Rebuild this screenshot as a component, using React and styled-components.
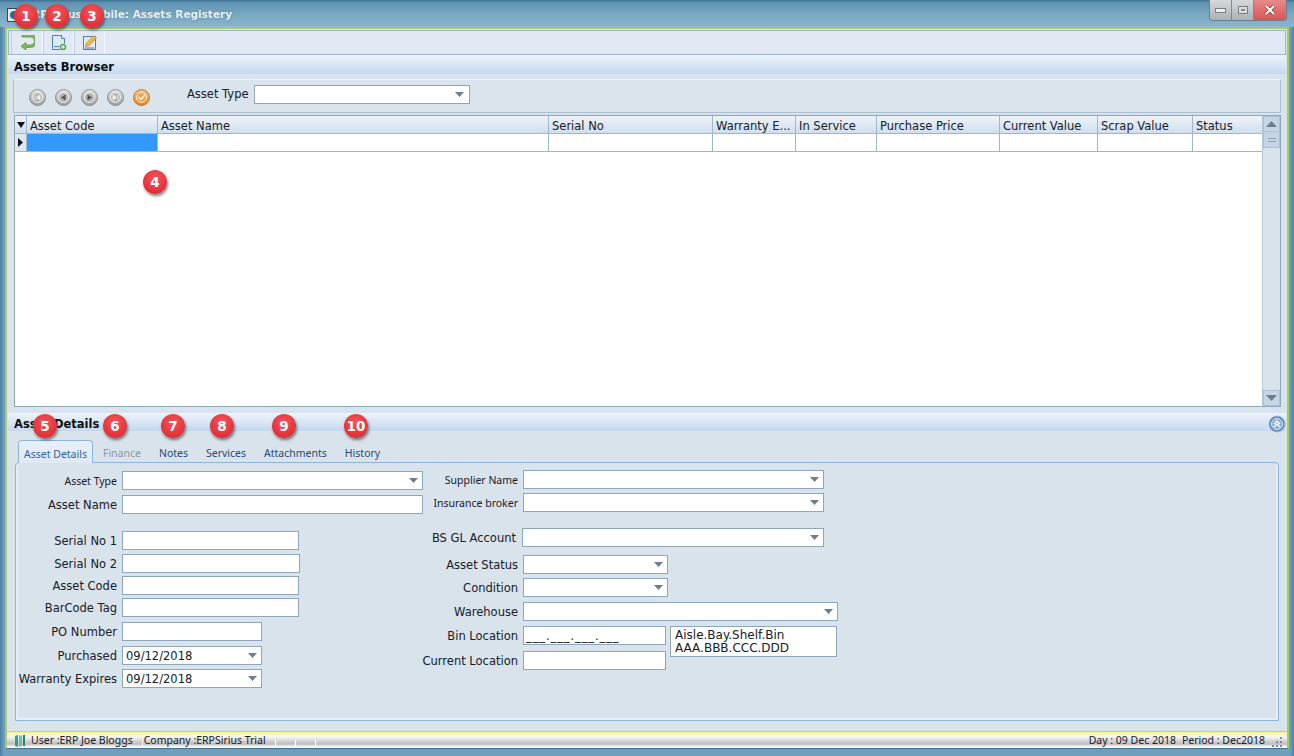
import styled, { createGlobalStyle } from "styled-components";

const GRID_COLUMNS = [
  { label: "Asset Code", width: 131 },
  { label: "Asset Name", width: 391 },
  { label: "Serial No", width: 164 },
  { label: "Warranty E...", width: 83 },
  { label: "In Service", width: 81 },
  { label: "Purchase Price", width: 123 },
  { label: "Current Value", width: 98 },
  { label: "Scrap Value", width: 95 },
  { label: "Status", width: 69 },
];

const TABS = ["Asset Details", "Finance", "Notes", "Services", "Attachments", "History"];

const BADGES = [
  { n: 1, x: 26, y: 16 }, { n: 2, x: 57, y: 16 }, { n: 3, x: 92, y: 16 },
  { n: 4, x: 155, y: 182 }, { n: 5, x: 45, y: 426 }, { n: 6, x: 115, y: 426 },
  { n: 7, x: 173, y: 426 }, { n: 8, x: 222, y: 426 }, { n: 9, x: 284, y: 426 },
  { n: 10, x: 356, y: 426 },
];

const LEFT_FIELDS = [
  { label: "Asset Type", w: 301, top: 0, combo: true, narrow: true },
  { label: "Asset Name", w: 301, top: 5 },
  { label: "Serial No 1", w: 177, top: 17 },
  { label: "Serial No 2", w: 178, top: 4 },
  { label: "Asset Code", w: 177, top: 3 },
  { label: "BarCode Tag", w: 177, top: 3 },
  { label: "PO Number", w: 140, top: 5 },
  { label: "Purchased", w: 140, top: 5, combo: true, value: "09/12/2018" },
  { label: "Warranty Expires", w: 140, top: 4, combo: true, value: "09/12/2018" },
];

const RIGHT_FIELDS = [
  { label: "Supplier Name", w: 301, top: -1, combo: true, narrow: true },
  { label: "Insurance broker", w: 301, top: 4, combo: true, narrow: true },
  { label: "BS GL Account", w: 302, top: 16, combo: true, shift: -1, pad: 2 },
  { label: "Asset Status", w: 145, top: 8, combo: true },
  { label: "Condition", w: 145, top: 4, combo: true },
  { label: "Warehouse", w: 315, top: 5, combo: true },
];

function Arrow() {
  return <svg width="9" height="5" viewBox="0 0 9 5"><path d="M0 0h9L4.5 5z" fill="#6d7f8f" /></svg>;
}

function ComboBox({ w, value, shift }) {
  return (
    <Input $w={w} $shift={shift}>
      <span>{value}</span>
      <ArrowSlot><Arrow /></ArrowSlot>
    </Input>
  );
}

function Field({ label, w, top, combo, value, narrow, shift, pad, labelWidth }) {
  return (
    <Row $top={top}>
      <Label $w={labelWidth} $narrow={narrow} $pad={pad}>{label}</Label>
      {combo ? <ComboBox w={w} value={value} shift={shift} /> : <Input $w={w} />}
    </Row>
  );
}

function NavButton({ orange, glyph }) {
  return (
    <svg width="17" height="17" viewBox="0 0 17 17">
      <defs>
        <linearGradient id={orange ? "navO" : "navG"} x1="0" y1="0" x2="0" y2="1">
          <stop offset="0" stopColor={orange ? "#fbc27a" : "#e4e4e4"} />
          <stop offset="1" stopColor={orange ? "#e8801e" : "#9c9c9c"} />
        </linearGradient>
      </defs>
      <circle cx="8.5" cy="8.5" r="8" fill={`url(#${orange ? "navO" : "navG"})`} stroke={orange ? "#d8761a" : "#8f8f8f"} />
      <circle cx="8.5" cy="8.5" r="5" fill={orange ? "#f9a24a" : "#b5b5b5"} stroke="#f4f4f4" strokeWidth="1" />
      {glyph === "first" && <path d="M6 6v5M11 6v5L7.5 8.5z" stroke="#eee" fill="#eee" strokeWidth=".8" />}
      {glyph === "prev" && <path d="M10.5 5.5v6L6 8.5z" fill="#555" />}
      {glyph === "next" && <path d="M6.5 5.5v6L11 8.5z" fill="#555" />}
      {glyph === "last" && <path d="M11 6v5M6 6v5L9.5 8.5z" stroke="#eee" fill="#eee" strokeWidth=".8" />}
      {orange && <path d="M5.5 8l2.5 2.5 4-5" stroke="#fff" strokeWidth="1.5" fill="none" />}
    </svg>
  );
}

export default function App() {
  return (
    <Win>
      <GlobalStyle />
      <TitleBar>
        <AppIcon viewBox="0 0 14 14">
          <rect x=".5" y=".5" width="13" height="13" fill="#dfe9ef" stroke="#31495c" />
          <circle cx="7" cy="7" r="4" fill="#2e6f8e" />
        </AppIcon>
        <TitleText>ERPSirius Mobile: Assets Registery</TitleText>
        <WinButtons>
          <WinBtn>
            <svg width="11" height="5" viewBox="0 0 11 5"><rect x=".5" y=".5" width="10" height="4" fill="#eee" stroke="#7d7d7d" /></svg>
          </WinBtn>
          <WinBtn>
            <svg width="10" height="8" viewBox="0 0 10 8"><rect x=".5" y=".5" width="9" height="7" fill="#ddd" stroke="#7d7d7d" /><rect x="3" y="3" width="4" height="2" fill="#8a8a8a" /></svg>
          </WinBtn>
          <CloseBtn>
            <svg width="12" height="10" viewBox="0 0 12 10"><path d="M2 1l8 8M10 1l-8 8" stroke="#7a3030" strokeWidth="3.4" /><path d="M2 1l8 8M10 1l-8 8" stroke="#fff" strokeWidth="2.2" /></svg>
          </CloseBtn>
        </WinButtons>
      </TitleBar>

      <Frame>
        <Toolbar>
          <ToolCell $w={32}>
            <svg width="15" height="15" viewBox="0 0 15 15">
              <path d="M2 1.5h8.5a4 4 0 0 1 0 8H6V7L1 10.8 6 14.5V12h4.5a6.5 6.5 0 0 0 0-13H2z" fill="#7dbb5a" stroke="#4f8f3a" strokeWidth=".7" transform="translate(0 .5)" />
            </svg>
          </ToolCell>
          <ToolCell $w={31}>
            <svg width="16" height="16" viewBox="0 0 16 16">
              <path d="M1.5.5h9l3 3v11h-12z" fill="#dbe9f9" stroke="#4d7fb8" />
              <path d="M10.5.5v3h3" fill="#fff" stroke="#4d7fb8" />
              <path d="M3 11.5h6" stroke="#4d7fb8" />
              <circle cx="12" cy="12" r="3.5" fill="#4fa14a" stroke="#e9f3e6" strokeWidth=".6" />
              <path d="M10 12h4M12 10v4" stroke="#fff" />
            </svg>
          </ToolCell>
          <ToolCell $w={31}>
            <svg width="16" height="16" viewBox="0 0 16 16">
              <rect x="1.5" y="1.5" width="12" height="13" fill="#dbe9f9" stroke="#4d7fb8" />
              <path d="M3.5 11.5l1-3.5 7.5-7.5 2.5 2.5-7.5 7.5z" fill="#f2b63d" stroke="#c98a1d" strokeWidth=".7" />
              <path d="M3 13h9" stroke="#4d7fb8" />
            </svg>
          </ToolCell>
        </Toolbar>

        <SectionHeader $h={19} $pt={5}>Assets Browser</SectionHeader>

        <NavPanel>
          <NavGroup>
            <NavButton glyph="first" />
            <NavButton glyph="prev" />
            <NavButton glyph="next" />
            <NavButton glyph="last" />
            <NavButton orange />
          </NavGroup>
          <NavLabel>Asset Type</NavLabel>
          <NavCombo><ComboBox w={216} /></NavCombo>
        </NavPanel>

        <Grid>
          <GridMain>
            <HeadRow>
              <Corner><svg width="8" height="6" viewBox="0 0 8 6"><path d="M0 0h8L4 6z" fill="#111" /></svg></Corner>
              {GRID_COLUMNS.map((c) => <HeadCell key={c.label} $w={c.width}>{c.label}</HeadCell>)}
            </HeadRow>
            <DataRow>
              <RowMark><svg width="5" height="9" viewBox="0 0 5 9"><path d="M0 0l5 4.5L0 9z" fill="#111" /></svg></RowMark>
              {GRID_COLUMNS.map((c, i) => <DataCell key={c.label} $w={c.width} $selected={i === 0} />)}
            </DataRow>
          </GridMain>
          <ScrollBar>
            <ScrollBtn><svg width="11" height="6" viewBox="0 0 11 6"><path d="M5.5 0L11 6H0z" fill="#6d7f8f" /></svg></ScrollBtn>
            <ScrollThumb><svg width="8" height="4" viewBox="0 0 8 4"><path d="M0 .5h8M0 3.5h8" stroke="#8fa6bb" /></svg></ScrollThumb>
            <ScrollTrack />
            <ScrollBtn><svg width="11" height="6" viewBox="0 0 11 6"><path d="M0 0h11L5.5 6z" fill="#6d7f8f" /></svg></ScrollBtn>
          </ScrollBar>
        </Grid>

        <SectionHeader $mt={6} $h={18} $pt={4}>
          Asset Details
          <Collapse viewBox="0 0 18 18">
            <circle cx="9" cy="9" r="8" fill="#5d88bd" stroke="#9cb8d8" />
            <circle cx="9" cy="9" r="5.5" fill="#87a9d2" stroke="#e4edf7" />
            <path d="M6 9l3-3 3 3M6 12l3-3 3 3" fill="none" stroke="#fff" strokeWidth="1.4" />
          </Collapse>
        </SectionHeader>

        <TabStrip>
          {TABS.map((t, i) => <Tab key={t} $active={i === 0} $disabled={t === "Finance"}>{t}</Tab>)}
        </TabStrip>

        <TabPanel>
          <LeftCol>
            {LEFT_FIELDS.map((f) => <Field key={f.label} {...f} labelWidth={101} />)}
          </LeftCol>
          <RightCol>
            {RIGHT_FIELDS.map((f) => <Field key={f.label} {...f} labelWidth={97} />)}
            <BinArea>
              <BinFields>
                <Row $top={0}>
                  <Label $w={97}>Bin Location</Label>
                  <Input $w={143}><Mask>___.___.___.___</Mask></Input>
                </Row>
                <Row $top={6}>
                  <Label $w={97}>Current Location</Label>
                  <Input $w={143} />
                </Row>
              </BinFields>
              <BinHint>Aisle.Bay.Shelf.Bin<br />AAA.BBB.CCC.DDD</BinHint>
            </BinArea>
          </RightCol>
        </TabPanel>

        <StatusBar>
          <StatusIcon viewBox="0 0 12 14">
            <path d="M1 2l3-1v12l-3-1z" fill="#3f9c8d" />
            <path d="M5 1l3 1v10l-3 1z" fill="#66c0ae" />
            <path d="M9 1h2v11H9z" fill="#2f7f73" />
          </StatusIcon>
          <StatusText>User :ERP Joe Bloggs</StatusText>
          <StatusDivider $ml={9} />
          <StatusText $ml={1}>Company :ERPSirius Trial</StatusText>
          <StatusDivider $ml={9} />
          <StatusDivider $ml={19} />
          <StatusDivider $ml={19} />
          <StatusRight>
            <StatusText>Day : 09 Dec 2018</StatusText>
            <StatusText $ml={6}>Period : Dec2018</StatusText>
            <Grip width="11" height="11" viewBox="0 0 11 11">
              <path d="M9 1h2v2H9zM5 5h2v2H5zM9 5h2v2H9zM1 9h2v2H1zM5 9h2v2H5zM9 9h2v2H9z" fill="#7b8ea0" />
            </Grip>
          </StatusRight>
        </StatusBar>
      </Frame>

      {BADGES.map((b) => (
        <Badge key={b.n} style={{ left: b.x - 12, top: b.y - 12 }}>{b.n}</Badge>
      ))}
    </Win>
  );
}

const GlobalStyle = createGlobalStyle`
  html, body { margin: 0; padding: 0; background: #3f6f92; }
  * { box-sizing: border-box; }
`;

const Win = styled.div`
  position: relative;
  width: 1294px;
  height: 756px;
  overflow: hidden;
  display: flex;
  flex-direction: column;
  font-family: "DejaVu Sans", sans-serif;
  font-size: 11.5px;
  color: #16202a;
  background: linear-gradient(to right, #4a7fa2 0, #6f9fbc 4px, #6f9fbc 1290px, #4a7fa2 100%);
  padding: 0 5px 7px 5px;
`;

const TitleBar = styled.div`
  height: 27px;
  flex: none;
  display: flex;
  align-items: flex-start;
  margin: 0 -5px;
  padding: 0 7px;
  background: linear-gradient(to bottom, #3f7394 0, #5f94b2 3px, #79a8c2 14px, #8bb4cb 100%);
`;

const AppIcon = styled.svg`
  width: 14px;
  height: 14px;
  margin-top: 8px;
  flex: none;
`;

const TitleText = styled.div`
  margin: 8px 0 0 4px;
  font-size: 10.5px;
  font-weight: 700;
  color: #e6eff5;
  text-shadow: 0 0 3px #5a8199;
`;

const WinButtons = styled.div`
  margin-left: auto;
  display: flex;
  height: 21px;
  border: 1px solid #6f7f8a;
  border-top: 0;
  border-radius: 0 0 4px 4px;
  overflow: hidden;
`;

const WinBtn = styled.div`
  width: 22px;
  display: flex;
  align-items: center;
  justify-content: center;
  background: linear-gradient(to bottom, #d6d9db, #a9b2b8);
  border-right: 1px solid #7c8a94;
`;

const CloseBtn = styled.div`
  width: 32px;
  display: flex;
  align-items: center;
  justify-content: center;
  background: linear-gradient(to bottom, #e88a8a, #d85656);
`;

const Frame = styled.div`
  flex: 1;
  min-height: 0;
  display: flex;
  flex-direction: column;
  background: #d9e3ec;
  border: 2px solid #a9c96a;
  border-bottom: 1px solid #3f6f92;
  padding: 1px 1px 0;
`;

const Toolbar = styled.div`
  height: 25px;
  flex: none;
  display: flex;
  padding-left: 2px;
  background: #e2e9f4;
  border: 1px solid #9ab7cf;
`;

const ToolCell = styled.div`
  width: ${(p) => p.$w}px;
  display: flex;
  align-items: center;
  justify-content: center;
  border-left: 1px solid #c3cfdd;
  border-right: 1px solid #f4f7fb;
`;

const SectionHeader = styled.div`
  position: relative;
  height: ${(p) => p.$h}px;
  flex: none;
  margin-top: ${(p) => p.$mt || 0}px;
  padding: ${(p) => p.$pt}px 0 0 6px;
  font-size: 11.5px;
  line-height: 14px;
  font-weight: 700;
  color: #0a0f14;
  background: linear-gradient(to bottom, #edf4fc, #c5d8ef);
`;

const Collapse = styled.svg`
  position: absolute;
  right: 0;
  top: 2px;
  width: 18px;
  height: 18px;
`;

const NavPanel = styled.div`
  height: 34px;
  flex: none;
  margin: 5px 5px 0 5px;
  padding-left: 15px;
  display: flex;
  align-items: center;
  background: #dbe4ec;
  border: 1px solid #a9bfd2;
  border-top-color: #eef3f7;
`;

const NavGroup = styled.div`
  display: flex;
  gap: 9px;
  margin-right: 37px;
  margin-top: 2px;
`;

const NavLabel = styled.span`
  margin: 0 5px 4px 0;
`;

const NavCombo = styled.div`
  margin-bottom: 4px;
`;

const Grid = styled.div`
  height: 292px;
  flex: none;
  display: flex;
  margin: 2px 5px 0 6px;
  background: #fff;
  border: 1px solid #8ea6bb;
`;

const GridMain = styled.div`
  flex: 1;
  min-width: 0;
`;

const HeadRow = styled.div`
  display: flex;
  height: 18px;
  background: linear-gradient(to bottom, #eef3f9, #d0dfee);
  border-bottom: 1px solid #9fb7cc;
`;

const Corner = styled.div`
  width: 12px;
  flex: none;
  display: flex;
  align-items: center;
  justify-content: center;
  border-right: 1px solid #9fb7cc;
`;

const HeadCell = styled.div`
  width: ${(p) => p.$w}px;
  flex: none;
  padding: 3px 0 0 3px;
  white-space: nowrap;
  overflow: hidden;
  border-right: 1px solid #9fb7cc;
  &:last-child { border-right: 0; flex: 1; }
`;

const DataRow = styled.div`
  display: flex;
  height: 18px;
  border-bottom: 1px solid #9fb7cc;
`;

const RowMark = styled.div`
  width: 12px;
  flex: none;
  display: flex;
  align-items: center;
  justify-content: center;
  background: #dde7f1;
  border-right: 1px solid #9fb7cc;
`;

const DataCell = styled.div`
  width: ${(p) => p.$w}px;
  flex: none;
  background: ${(p) => (p.$selected ? "#3399ff" : "#fff")};
  border-right: 1px solid #9fb7cc;
  &:last-child { border-right: 0; flex: 1; }
`;

const ScrollBar = styled.div`
  width: 18px;
  flex: none;
  display: flex;
  flex-direction: column;
  background: #d9e3ec;
  border-left: 1px solid #b5c6d6;
`;

const ScrollBtn = styled.div`
  height: 16px;
  display: flex;
  align-items: center;
  justify-content: center;
  background: #c7d6e4;
  border: 1px solid #aec1d2;
`;

const ScrollThumb = styled.div`
  height: 16px;
  display: flex;
  align-items: center;
  justify-content: center;
  background: #c4d4e4;
  border: 1px solid #aec1d2;
  border-top: 0;
`;

const ScrollTrack = styled.div`
  flex: 1;
`;

const TabStrip = styled.div`
  height: 22px;
  flex: none;
  display: flex;
  align-items: flex-start;
  margin: 9px 0 0 10px;
  position: relative;
  z-index: 1;
`;

const Tab = styled.div`
  height: ${(p) => (p.$active ? "23px" : "22px")};
  padding: 4px ${(p) => (p.$active ? "5px" : "9px")} 0;
  margin-right: ${(p) => (p.$active ? "1px" : "0")};
  display: flex;
  align-items: center;
  font-family: "Noto Sans", sans-serif;
  font-size: 10.5px;
  color: ${(p) => (p.$disabled ? "#8d98a2" : "#2b4a73")};
  ${(p) => p.$active && `
    color: #31619a;
    background: linear-gradient(to bottom, #e8f0fa, #dfe9f4);
    border: 1px solid #8fb3e0;
    border-bottom: 0;
    border-radius: 4px 4px 0 0;
  `}
`;

const TabPanel = styled.div`
  height: 259px;
  flex: none;
  margin: 0 7px 0 7px;
  display: flex;
  padding: 8px 0 0 0;
  background: #d9e3ec;
  border: 1px solid #8fb3e0;
  border-radius: 4px 4px 0 0;
  box-shadow: inset -2px -2px 0 #e6edf4, inset 2px 0 0 #e6edf4;
`;

const LeftCol = styled.div`
  width: 405px;
  flex: none;
  display: flex;
  flex-direction: column;
`;

const RightCol = styled.div`
  flex: 1;
  display: flex;
  flex-direction: column;
`;

const Row = styled.div`
  display: flex;
  align-items: center;
  margin-top: ${(p) => p.$top}px;
  height: 19px;
`;

const Label = styled.label`
  width: ${(p) => p.$w}px;
  flex: none;
  margin-right: 5px;
  padding-right: ${(p) => p.$pad || 0}px;
  text-align: right;
  white-space: nowrap;
  font-family: ${(p) => (p.$narrow ? '"Noto Sans"' : '"DejaVu Sans"')}, sans-serif;
  font-size: ${(p) => (p.$narrow ? "10.5px" : "11.5px")};
`;

const Input = styled.div`
  width: ${(p) => p.$w}px;
  height: 19px;
  margin-left: ${(p) => p.$shift || 0}px;
  flex: none;
  display: flex;
  align-items: center;
  padding-left: 3px;
  background: #fff;
  border: 1px solid #8ea6bb;
  span { flex: 1; }
`;

const ArrowSlot = styled.div`
  width: 18px;
  flex: none;
  display: flex;
  align-items: center;
  justify-content: center;
`;

const Mask = styled.span`
  margin-left: -1px;
  font-size: 11.5px;
  letter-spacing: 0.9px;
  white-space: nowrap;
`;

const BinArea = styled.div`
  display: flex;
  margin-top: 5px;
`;

const BinFields = styled.div`
  display: flex;
  flex-direction: column;
`;

const BinHint = styled.div`
  width: 167px;
  height: 31px;
  margin: 0 0 0 4px;
  padding: 2px 4px;
  background: #fff;
  border: 1px solid #8ea6bb;
  line-height: 13px;
  font-size: 12px;
  white-space: nowrap;
`;

const StatusBar = styled.div`
  flex: 1;
  min-height: 0;
  margin: 10px -1px 0;
  display: flex;
  align-items: stretch;
  padding: 0 5px 0 7px;
  background: linear-gradient(to bottom, #f3f08e 0, #fbfad0 3px, #f4f4f4 5px, #bdbdbd 12px, #ffffff 15px);
  border-top: 1px solid #cfd65f;
`;

const StatusIcon = styled.svg`
  width: 12px;
  height: 14px;
  margin: 2px 5px 0 0;
`;

const StatusText = styled.span`
  margin-left: ${(p) => p.$ml || 0}px;
  padding-top: 1px;
  line-height: 15px;
  font-family: "Noto Sans", sans-serif;
  font-size: 10.5px;
  white-space: nowrap;
`;

const StatusDivider = styled.div`
  width: 1px;
  flex: none;
  margin: 8px 0 0 ${(p) => p.$ml}px;
  background: #fff;
`;

const StatusRight = styled.div`
  margin-left: auto;
  display: flex;
  align-items: flex-start;
`;

const Grip = styled.svg`
  margin: 4px 0 0 6px;
`;

const Badge = styled.div`
  position: absolute;
  width: 24px;
  height: 24px;
  display: flex;
  align-items: center;
  justify-content: center;
  border-radius: 50%;
  background: radial-gradient(circle at 50% 35%, #f4565a, #d9202a);
  box-shadow: 1px 2px 3px rgba(0, 0, 0, 0.5);
  color: #fff;
  font-family: "DejaVu Sans", sans-serif;
  font-size: 13.5px;
  font-weight: 700;
  z-index: 5;
`;
